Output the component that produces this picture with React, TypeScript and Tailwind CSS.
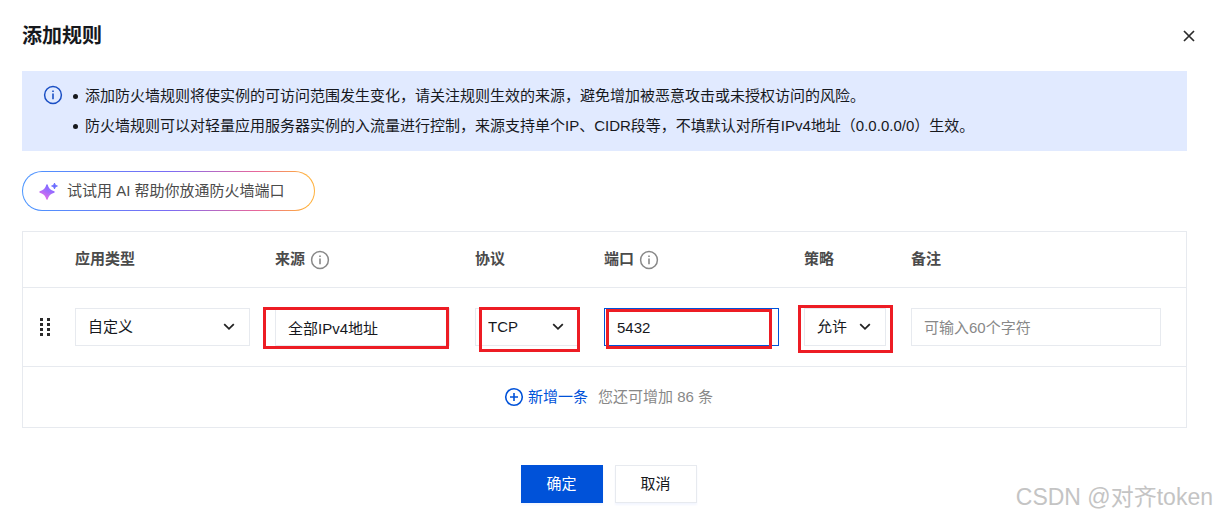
import { useState } from "react";

const fieldBase =
  "block w-full h-[38px] border bg-white px-3 text-[15px] text-[#16181d] outline-none placeholder:text-[#888888] placeholder:opacity-100";

function InfoIcon({ className }: { className: string }) {
  return (
    <svg className={className} viewBox="0 0 20 20" width="20" height="20" fill="none">
      <circle cx="10" cy="10" r="8.4" stroke="currentColor" strokeWidth="1.5" />
      <path d="M10 8.6V14.2" stroke="currentColor" strokeWidth="1.6" />
      <path d="M10 5.4V7" stroke="currentColor" strokeWidth="1.6" />
    </svg>
  );
}

function Sparkle() {
  return (
    <svg viewBox="0 0 20 20" width="20" height="20">
      <defs>
        <linearGradient id="spark" x1="14" y1="2" x2="6" y2="18" gradientUnits="userSpaceOnUse">
          <stop offset="0" stopColor="#6a6cff" />
          <stop offset="0.5" stopColor="#9b6bff" />
          <stop offset="1" stopColor="#e26be8" />
        </linearGradient>
      </defs>
      <path
        d="M8 4C9 8.2 10.6 9.9 15 11C10.6 12.1 9 13.8 8 18C7 13.8 5.4 12.1 1 11C5.4 9.9 7 8.2 8 4Z"
        fill="url(#spark)"
        stroke="url(#spark)"
        strokeWidth="1.4"
        strokeLinejoin="round"
      />
      <path
        d="M15.5 2C15.8 3.8 16.6 4.6 18.4 5C16.6 5.4 15.8 6.2 15.5 8C15.2 6.2 14.4 5.4 12.6 5C14.4 4.6 15.2 3.8 15.5 2Z"
        fill="#6a6cff"
        stroke="#6a6cff"
        strokeWidth="0.9"
        strokeLinejoin="round"
      />
    </svg>
  );
}

function Select({ label, options }: { label: string; options: string[] }) {
  return (
    <div className="relative">
      <select
        aria-label={label}
        className={`${fieldBase} appearance-none border-[#e7eaef] leading-9`}
      >
        {options.map((o) => (
          <option key={o}>{o}</option>
        ))}
      </select>
      <svg
        className="pointer-events-none absolute right-[15px] top-[13px] text-[#222222]"
        viewBox="0 0 12 12"
        width="12"
        height="12"
        fill="none"
      >
        <path d="M1.2 3.2L6 7.8L10.8 3.2" stroke="currentColor" strokeWidth="1.8" />
      </svg>
    </div>
  );
}

// red frame drawn over a field
function Mark({ className }: { className: string }) {
  return (
    <span className={`pointer-events-none absolute z-10 border-3 border-[#ed1c24] ${className}`} />
  );
}

function App() {
  const [port, setPort] = useState("5432");

  return (
    <div className="relative min-h-screen bg-white text-[15px] text-[#16181d] font-['Liberation_Sans','Noto_Sans_CJK_SC',sans-serif]">
      <header className="flex h-[71px] items-center justify-between pl-[22px] pr-[19px]">
        <h1 className="text-xl font-bold leading-7">添加规则</h1>
        <button type="button" aria-label="关闭" className="flex size-[18px] items-center justify-center">
          <svg viewBox="0 0 12 12" width="12" height="12" fill="none">
            <path d="M1 1L11 11M11 1L1 11" stroke="#2b2b2b" strokeWidth="1.7" />
          </svg>
        </button>
      </header>

      <main className="pl-[22px] pr-[30px]">
        <div className="flex bg-[#e1eaff] py-[10px] pl-[21px] leading-[30px]">
          <InfoIcon className="mt-1 shrink-0 text-[#1a4fc4]" />
          <ul className="ml-[10px]">
            <li className="flex">
              <span className="mr-[7px] mt-[13px] size-[5px] shrink-0 rounded-full bg-[#16181d]" />
              添加防火墙规则将使实例的可访问范围发生变化，请关注规则生效的来源，避免增加被恶意攻击或未授权访问的风险。
            </li>
            <li className="flex">
              <span className="mr-[7px] mt-[13px] size-[5px] shrink-0 rounded-full bg-[#16181d]" />
              防火墙规则可以对轻量应用服务器实例的入流量进行控制，来源支持单个IP、CIDR段等，不填默认对所有IPv4地址（0.0.0.0/0）生效。
            </li>
          </ul>
        </div>

        <button
          type="button"
          className="mt-5 block rounded-full p-px bg-[linear-gradient(90deg,#4b96ff_0%,#7a6cf5_50%,#e8669b_80%,#ffb03c_97%)]"
        >
          <span className="flex h-[38px] items-center gap-2 rounded-full bg-white pl-4 pr-[29px] text-[#4b4b4b]">
            <Sparkle />
            试试用 AI 帮助你放通防火墙端口
          </span>
        </button>

        <div className="mt-5 border border-[#e7eaef]">
          <table className="w-full table-fixed border-separate border-spacing-0 text-left">
            <colgroup>
              <col className="w-[52px]" />
              <col className="w-[200px]" />
              <col className="w-[200px]" />
              <col className="w-[129px]" />
              <col className="w-[200px]" />
              <col className="w-[107px]" />
              <col />
            </colgroup>
            <thead>
              <tr className="h-14 text-[#4b4b4b] [&>th]:border-b [&>th]:border-[#e7eaef]">
                <th />
                <th>应用类型</th>
                <th>
                  <span className="flex items-center gap-[5px]">
                    来源
                    <InfoIcon className="text-[#888888]" />
                  </span>
                </th>
                <th>协议</th>
                <th>
                  <span className="flex items-center gap-[5px]">
                    端口
                    <InfoIcon className="text-[#888888]" />
                  </span>
                </th>
                <th>策略</th>
                <th>备注</th>
              </tr>
            </thead>
            <tbody>
              <tr className="[&>td]:border-b [&>td]:border-[#e7eaef] [&>td]:py-5 [&>td]:pr-[25px]">
                <td className="pl-[17px]">
                  <svg viewBox="0 0 10 18" width="10" height="18" fill="#2b2b2b">
                    {[0, 5, 10, 15].map((y) => (
                      <g key={y}>
                        <rect x="0" y={y} width="3" height="3" />
                        <rect x="7" y={y} width="3" height="3" />
                      </g>
                    ))}
                  </svg>
                </td>
                <td>
                  <Select label="应用类型" options={["自定义"]} />
                </td>
                <td>
                  <div className="relative">
                    <input
                      aria-label="来源"
                      defaultValue="全部IPv4地址"
                      className={`${fieldBase} border-[#e7eaef]`}
                    />
                    <Mark className="-left-3 -top-px h-[42px] right-px" />
                  </div>
                </td>
                <td>
                  <div className="relative">
                    <Select label="协议" options={["TCP"]} />
                    <Mark className="left-1 -right-px -top-px h-[45px]" />
                  </div>
                </td>
                <td>
                  <div className="relative">
                    <input
                      aria-label="端口"
                      value={port}
                      onChange={(e) => setPort(e.target.value)}
                      className={`${fieldBase} border-[#0052d9]`}
                    />
                    <Mark className="left-[2px] right-[7px] top-px h-10" />
                  </div>
                </td>
                <td>
                  <div className="relative">
                    <Select label="策略" options={["允许"]} />
                    <Mark className="-left-[6px] -right-[7px] -top-[3px] h-12" />
                  </div>
                </td>
                <td>
                  <input
                    aria-label="备注"
                    placeholder="可输入60个字符"
                    className={`${fieldBase} border-[#e7eaef]`}
                  />
                </td>
              </tr>
            </tbody>
          </table>
          <div className="flex h-[60px] items-center justify-center pl-2">
            <button type="button" className="flex items-center gap-1 text-[#0052d9]">
              <svg viewBox="0 0 20 20" width="20" height="20" fill="none">
                <circle cx="10" cy="10" r="8.3" stroke="currentColor" strokeWidth="1.6" />
                <path d="M10 6V14M6 10H14" stroke="currentColor" strokeWidth="1.6" />
              </svg>
              新增一条
            </button>
            <span className="ml-[10px] text-[#888888]">您还可增加 86 条</span>
          </div>
        </div>
      </main>

      <footer className="mt-[37px] flex justify-center gap-3">
        <button
          type="button"
          className="h-[38px] w-[82px] bg-[#0052d9] text-white shadow-[0_2px_2px_#f3f6ff]"
        >
          确定
        </button>
        <button
          type="button"
          className="h-[38px] w-[82px] border border-[#e7eaef] bg-white shadow-[0_2px_2px_#f3f6ff]"
        >
          取消
        </button>
      </footer>

      <div className="pointer-events-none absolute bottom-1 right-1 text-[23px] leading-8 text-[#c4c4c4] [text-shadow:-1px_-1px_0_#ffffff]">
        CSDN @对齐token
      </div>
    </div>
  );
}

export default App;
